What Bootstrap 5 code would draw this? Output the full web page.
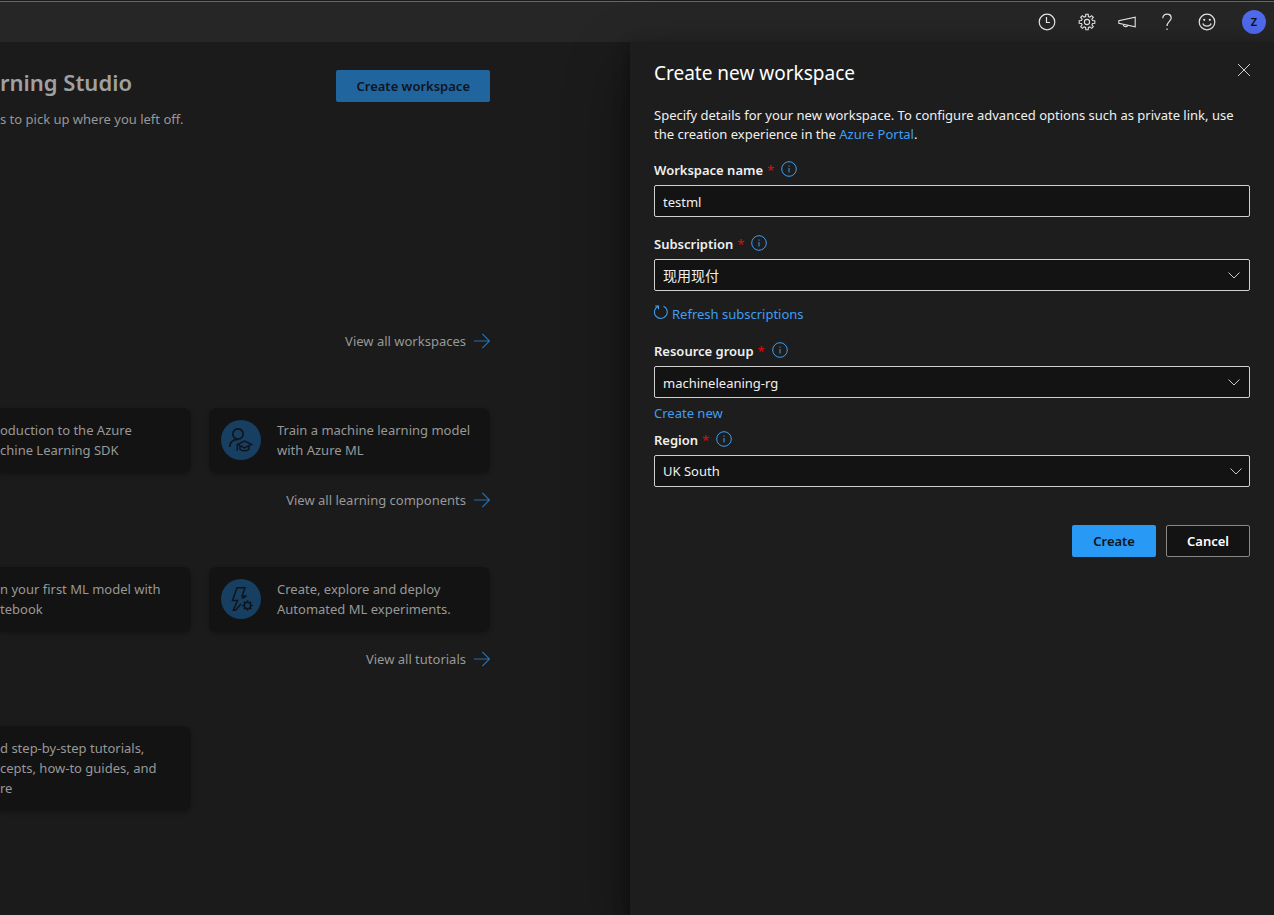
<!DOCTYPE html>
<html lang="en" data-bs-theme="dark">
<head>
<meta charset="utf-8">
<meta name="viewport" content="width=device-width, initial-scale=1">
<title>Create new workspace</title>
<link href="https://cdn.jsdelivr.net/npm/bootstrap@5.3.0/dist/css/bootstrap.min.css" rel="stylesheet">
<style>
  body { font: 400 13px/20px "Noto Sans", "Noto Sans CJK SC", sans-serif; background: #1b1b1b; color: #f0f0f0; }
  a { color: #3f9df2; text-decoration: none; }
  svg { display: block; flex: none; }
  .icon { fill: none; stroke: currentColor; }

  .topbar { height: 42px; padding-top: 2px; background: linear-gradient(#1b1b1b 1px, #666 1px, #666 2px, #262626 2px); }
  .tool { width: 40px; height: 40px; color: #e8e8e8; }
  .avatar { width: 24px; height: 24px; margin: 0 8px 0 15px; background: #4f6bed; color: #0b0b14; font-size: 11px; font-weight: 600; }

  .home { color: #989898; padding: 26px 140px 40px 0; min-width: 0; }
  .home h1 { font-size: 22px; line-height: 28px; font-weight: 600; color: #a0a0a0; }
  .home-intro { margin: 7px 0 202px; }
  .btn-flat { height: 32px; padding: 0 21px; border-radius: 2px; font-size: 13px; line-height: 20px; font-weight: 600; }
  .btn-dim { background: #21659f; color: #10151b; margin-top: 2px; padding: 0 20px; }
  .view-all { color: #989898; gap: 8px; }
  .view-all svg { color: #2671ae; }
  .tiles { display: grid; grid-template-columns: minmax(0, 1fr) 281px; gap: 18px; margin: 57px 0 17px; }
  .tile { background: #131313; border-radius: 8px; padding: 12px 12px 13px; gap: 16px; color: #989898; box-shadow: 0 2px 4px rgba(0, 0, 0, .25); }
  .tile-cut { border-radius: 0 8px 8px 0; padding-left: 0; white-space: nowrap; }
  .disc { width: 40px; height: 40px; background: #173f62; color: #10151b; }

  .side-panel { width: 644px; background: #1d1d1d; padding: 17px 24px 24px; z-index: 2; box-shadow: 0 26px 58px rgba(0, 0, 0, .45), 0 5px 14px rgba(0, 0, 0, .4); }
  .side-panel h2 { font-size: 19px; line-height: 28px; font-weight: 400; }
  .close-x { width: 16px; height: 16px; margin: 3px -2px 0 0; color: #d0d0d0; }
  .side-intro { margin: 19px 0 16px; line-height: 19px; }
  .field-name { gap: 4px; margin-bottom: 5px; font-weight: 600; }
  .star { color: #e00b0b; font-weight: 400; }
  .info { margin: 0 0 2px 3px; color: #3f9df2; }
  .field, .field:focus { height: 32px; padding: 1px 32px 0 8px; border: 1px solid #d2d0ce; border-radius: 2px; background-color: #131313; color: #f0f0f0; font-size: 13px; line-height: 20px; }
  select.field { background-image: url("data:image/svg+xml,%3csvg xmlns='http://www.w3.org/2000/svg' viewBox='0 0 12 12'%3e%3cpath d='M.5 3.5 6 9l5.5-5.5' fill='none' stroke='%23c8c8c8'/%3e%3c/svg%3e"); background-size: 12px 12px; background-position: right 9px center; }
  select.field-wide { background-position: right 7px center; padding-top: 0; }
  select.field-cjk { font-size: 14px; }
  .refresh { gap: 4px; margin-top: 13px; }
  .refresh svg { margin-bottom: 4px; }
  .create-new { margin: 5px 0 7px; }
  .actions { gap: 10px; margin-top: 38px; }
  .btn-main { background: #2899f5; color: #10151b; }
  .btn-plain { background: #131313; color: #fff; border: 1px solid #8a8886; padding: 0 20px; }
  .gap-above { margin-top: 17px; }
</style>
</head>
<body class="d-flex flex-column min-vh-100 overflow-x-hidden">

<header class="topbar d-flex align-items-center justify-content-end">
  <button class="btn p-0 border-0 tool d-flex align-items-center justify-content-center" aria-label="Recent">
    <svg class="icon" width="18" height="18" viewBox="0 0 18 18" stroke-width="1.2"><circle cx="9" cy="9" r="7.8"/><path d="M8.5 4v5.5H12"/></svg>
  </button>
  <button class="btn p-0 border-0 tool d-flex align-items-center justify-content-center" aria-label="Settings">
    <svg class="icon" width="18" height="18" viewBox="0 0 18 18" stroke-width="1.1"><path d="M7.600 3.500 7.800 1.200h2.400l.2 2.300 1.500.6 1.700-1.400 1.700 1.700-1.400 1.700.6 1.500 2.300.2v2.400l-2.300.2-.6 1.500 1.400 1.700-1.700 1.700-1.700-1.400-1.500.6-.2 2.300H7.800l-.2-2.300-1.500-.6-1.700 1.400-1.700-1.700 1.400-1.700-.6-1.500-2.300-.2V7.800l2.300-.2.6-1.500-1.400-1.700 1.700-1.700 1.700 1.400z"/><circle cx="9" cy="9" r="2.600"/></svg>
  </button>
  <button class="btn p-0 border-0 tool d-flex align-items-center justify-content-center" aria-label="News">
    <svg class="icon" width="18" height="18" viewBox="0 0 18 18" stroke-width="1.1"><path d="M17.200 4.200v9.600L.8 10.200V7.800zM5 11.200c.2 2.800 4.300 3.300 4.900 1"/></svg>
  </button>
  <button class="btn p-0 border-0 tool d-flex align-items-center justify-content-center" aria-label="Help">
    <svg class="icon" width="18" height="18" viewBox="0 0 18 18" stroke-width="1.2"><path d="M4.800 5.200C4.800 2.700 6.600 1.200 9 1.200s4.200 1.500 4.200 3.800c0 3.100-4.200 3.800-4.200 8"/><path d="M9 15.500v1.500"/></svg>
  </button>
  <button class="btn p-0 border-0 tool d-flex align-items-center justify-content-center" aria-label="Feedback">
    <svg class="icon" width="18" height="18" viewBox="0 0 18 18" stroke-width="1.2"><circle cx="9" cy="9" r="7.800"/><path d="M4.800 10.500c1.300 3.500 7.100 3.500 8.400 0"/><g fill="currentColor" stroke="none"><circle cx="6.200" cy="6.800" r="1.100"/><circle cx="11.800" cy="6.800" r="1.100"/></g></svg>
  </button>
  <button class="btn p-0 border-0 avatar rounded-circle d-flex align-items-center justify-content-center">Z</button>
</header>

<div class="d-flex flex-fill">
  <main class="home flex-fill">
    <div class="d-flex justify-content-between">
      <h1 class="m-0 text-nowrap">rning Studio</h1>
      <button class="btn btn-flat btn-dim border-0">Create workspace</button>
    </div>
    <p class="home-intro">s to pick up where you left off.</p>

    <a href="#" class="view-all d-flex justify-content-end align-items-center">View all workspaces
      <svg class="icon" width="16" height="16" viewBox="0 0 16 16" stroke-width="1.2"><path d="M0 8h15.500M8.300.8 15.500 8l-7.200 7.200"/></svg></a>

    <div class="tiles">
      <a href="#" class="tile tile-cut">oduction to the Azure<br>chine Learning SDK</a>
      <a href="#" class="tile d-flex">
        <span class="disc rounded-circle d-flex align-items-center justify-content-center">
          <svg class="icon" width="24" height="24" viewBox="0 0 24 24" stroke-width="1.7"><circle cx="9" cy="6" r="5.200"/><path d="M.8 19c0-4.500 3.200-7.700 8.200-7.700"/><path d="M8.300 22.800v-6.300L15.500 13l7 3.300-7 3.500-7-3.500M11 18v3.200c2.500 2.200 6.500 2.200 9 0V18" stroke-width="1.5"/></svg>
        </span>
        <span>Train a machine learning model<br>with Azure ML</span>
      </a>
    </div>

    <a href="#" class="view-all d-flex justify-content-end align-items-center">View all learning components
      <svg class="icon" width="16" height="16" viewBox="0 0 16 16" stroke-width="1.2"><path d="M0 8h15.500M8.300.8 15.500 8l-7.200 7.200"/></svg></a>

    <div class="tiles">
      <a href="#" class="tile tile-cut">n your first ML model with<br>tebook</a>
      <a href="#" class="tile d-flex">
        <span class="disc rounded-circle d-flex align-items-center justify-content-center">
          <svg class="icon" width="24" height="24" viewBox="0 0 24 24" stroke-width="1.5"><path d="M12.800 11.500 17.500 9H13l3-8.200H8L3.500 13.500h5L4.300 23.200h2.200L12 17"/><circle cx="18.500" cy="18.500" r="3.200"/><path d="M18.500 13.200v2M18.500 21.800v2M13.200 18.500h2M21.800 18.500h2M14.800 14.800l1.400 1.400M20.800 20.800l1.400 1.400M14.800 22.200l1.400-1.400M20.800 16.200l1.400-1.400"/></svg>
        </span>
        <span>Create, explore and deploy<br>Automated ML experiments.</span>
      </a>
    </div>

    <a href="#" class="view-all d-flex justify-content-end align-items-center">View all tutorials
      <svg class="icon" width="16" height="16" viewBox="0 0 16 16" stroke-width="1.2"><path d="M0 8h15.500M8.300.8 15.500 8l-7.200 7.200"/></svg></a>

    <div class="tiles">
      <a href="#" class="tile tile-cut">d step-by-step tutorials,<br>cepts, how-to guides, and<br>re</a>
    </div>
  </main>

  <aside class="side-panel position-relative flex-shrink-0">
    <div class="d-flex justify-content-between align-items-start">
      <h2 class="m-0">Create new workspace</h2>
      <button class="btn p-0 border-0 close-x" aria-label="Close"><svg class="icon" width="16" height="16" viewBox="0 0 16 16"><path d="M2 2l12 12M14 2 2 14"/></svg></button>
    </div>
    <p class="side-intro">Specify details for your new workspace. To configure advanced options such as private link, use the creation experience in the <a href="#">Azure Portal</a>.</p>

    <form>
      <label class="field-name d-flex align-items-center" for="ws-name">Workspace name <span class="star">*</span>
        <svg class="icon info" width="16" height="16" viewBox="0 0 16 16"><circle cx="8" cy="8" r="7.300"/><path d="M8 7v4.500M8 4.500v1.200"/></svg></label>
      <input class="form-control field" id="ws-name" type="text" value="testml">

      <label class="field-name gap-above d-flex align-items-center" for="ws-sub">Subscription <span class="star">*</span>
        <svg class="icon info" width="16" height="16" viewBox="0 0 16 16"><circle cx="8" cy="8" r="7.300"/><path d="M8 7v4.500M8 4.500v1.200"/></svg></label>
      <select class="form-select field field-cjk" id="ws-sub"><option>现用现付</option></select>
      <a href="#" class="refresh d-flex align-items-center">
        <svg class="icon" width="14" height="14" viewBox="0 0 14 14" stroke-width="1.1"><path d="M9.500 1.200A6.400 6.400 0 1 1 4 1.300M1.200 1h3.300v3.300"/></svg>Refresh subscriptions</a>

      <label class="field-name gap-above d-flex align-items-center" for="ws-group">Resource group <span class="star">*</span>
        <svg class="icon info" width="16" height="16" viewBox="0 0 16 16"><circle cx="8" cy="8" r="7.300"/><path d="M8 7v4.500M8 4.500v1.200"/></svg></label>
      <select class="form-select field" id="ws-group"><option>machineleaning-rg</option></select>
      <a href="#" class="create-new d-block">Create new</a>

      <label class="field-name d-flex align-items-center" for="ws-region">Region <span class="star">*</span>
        <svg class="icon info" width="16" height="16" viewBox="0 0 16 16"><circle cx="8" cy="8" r="7.300"/><path d="M8 7v4.500M8 4.500v1.200"/></svg></label>
      <select class="form-select field field-wide" id="ws-region"><option>UK South</option></select>

      <div class="actions d-flex justify-content-end">
        <button type="button" class="btn btn-flat btn-main border-0">Create</button>
        <button type="button" class="btn btn-flat btn-plain">Cancel</button>
      </div>
    </form>
  </aside>
</div>

<script src="https://cdn.jsdelivr.net/npm/bootstrap@5.3.0/dist/js/bootstrap.bundle.min.js"></script>
</body>
</html>
